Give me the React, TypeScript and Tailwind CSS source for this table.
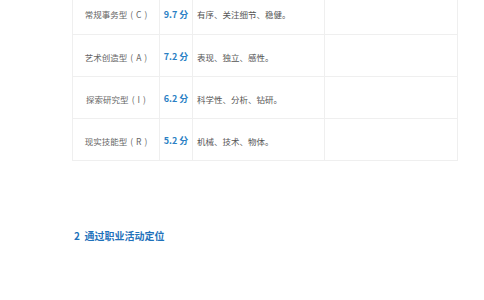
const rows = [
  { name: "常规事务型", code: "C", score: "9.7 分", desc: "有序、关注细节、稳健。" },
  { name: "艺术创造型", code: "A", score: "7.2 分", desc: "表现、独立、感性。" },
  { name: "探索研究型", code: "I", score: "6.2 分", desc: "科学性、分析、钻研。" },
  { name: "现实技能型", code: "R", score: "5.2 分", desc: "机械、技术、物体。" },
];

export default function App() {
  return (
    <div
      className="w-[484px] h-[300px] overflow-hidden bg-white"
      style={{ fontFamily: '"Noto Sans CJK SC", "Noto Sans", sans-serif' }}
    >
      <div className="ml-[72px] mt-[-8px] w-[386px] border-x border-b border-[#efefef]">
        {rows.map((r, i) => (
          <div
            key={r.name}
            className={`flex h-[42px] items-center ${i > 0 ? "border-t border-[#efefef]" : ""}`}
          >
            <div className="flex h-full w-[87px] items-center justify-center border-r border-[#efefef] pt-[3px] text-[8.5px] text-[#666]">
              {r.name}
              <span className="ml-[3px]">(</span>
              <span className="px-[3px]">{r.code}</span>
              <span>)</span>
            </div>
            <div className="flex h-full w-[33px] items-center justify-center border-r border-[#efefef] pt-[3px] text-[9px] font-bold text-[#2b7fc4]">
              {r.score}
            </div>
            <div className="flex h-full w-[132px] items-center border-r border-[#efefef] pl-[4px] pt-[3px] text-[8.5px] text-[#555]">
              {r.desc}
            </div>
            <div className="h-full flex-1" />
          </div>
        ))}
      </div>
      <div className="ml-[74px] mt-[67px] text-[10px] font-bold text-[#1f72bb]">
        2&nbsp;&nbsp;通过职业活动定位
      </div>
    </div>
  );
}
